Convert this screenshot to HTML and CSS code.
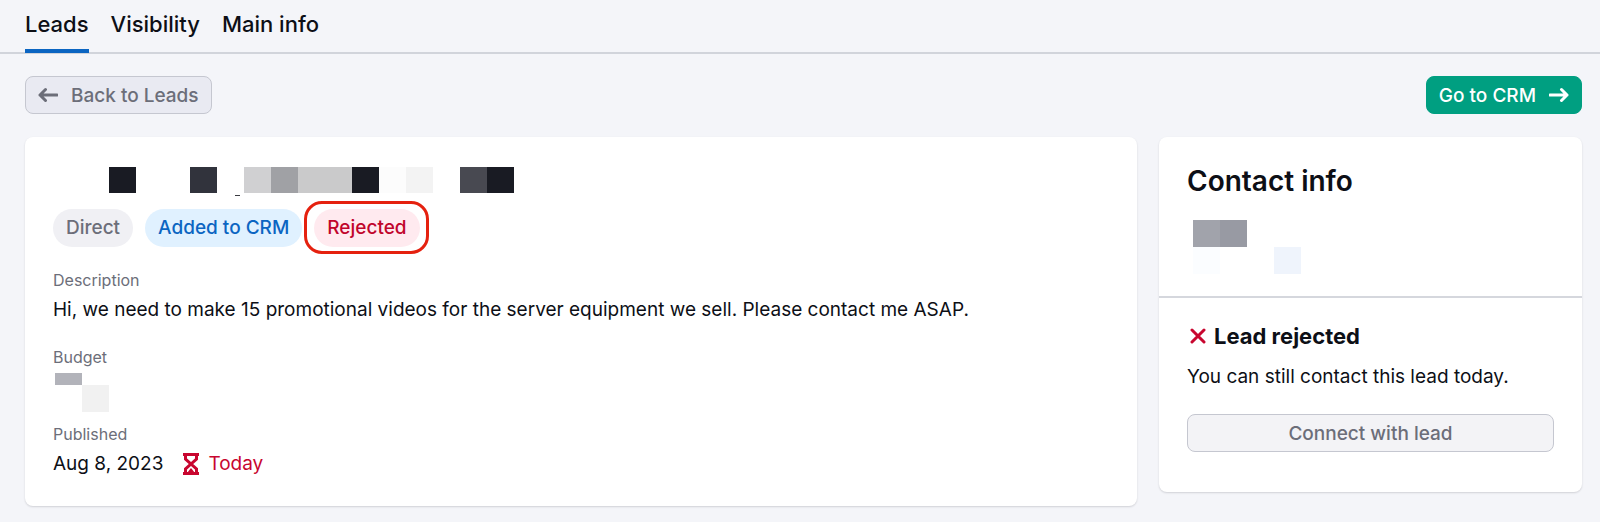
FILE: index.html
```
<!DOCTYPE html>
<html lang="en">
<head>
    <meta charset="UTF-8">
    <meta name="viewport" content="width=device-width, initial-scale=1.0">
    <title>Leads</title>
    <link rel="stylesheet" href="styles.css">
</head>
<body>
    <nav class="tabs">
        <a href="#" class="tab active">Leads</a>
        <a href="#" class="tab">Visibility</a>
        <a href="#" class="tab">Main info</a>
    </nav>
    <div class="toolbar">
        <button type="button" class="btn btn-back">
            <svg width="20" height="16" viewBox="0 0 20 16"><path d="M7.500 2.500 L2 8 L7.500 13.500 M2 8 H19"/></svg>
            Back to Leads
        </button>
        <button type="button" class="btn btn-crm">
            Go to CRM
            <svg width="20" height="16" viewBox="0 0 20 16"><path d="M12.500 2.500 L18 8 L12.500 13.500 M18 8 H1"/></svg>
        </button>
    </div>
    <main>
        <section class="card lead">
            <!-- hidden lead name -->
            <div class="mask mask-name">
                <i class="c-dark"></i><i></i><i></i><i class="c-coal"></i><i class="tail"></i>
                <i class="c-silver"></i><i class="c-gray"></i><i class="c-light"></i><i class="c-light"></i>
                <i class="c-dark"></i><i class="c-snow"></i><i class="c-pale"></i><i></i>
                <i class="c-slate"></i><i class="c-dark"></i>
            </div>
            <div class="tags">
                <span class="tag tag-direct">Direct</span>
                <span class="tag tag-crm">Added to CRM</span>
                <span class="tag tag-rejected">Rejected</span>
            </div>
            <dl>
                <dt>Description</dt>
                <dd>Hi, we need to make 15 promotional videos for the server equipment we sell. Please contact me ASAP.</dd>
                <dt>Budget</dt>
                <dd class="budget">
                    <div class="mask mask-budget">
                        <i class="c-steel"></i><i></i>
                        <i></i><i class="c-fog"></i>
                    </div>
                </dd>
                <dt>Published</dt>
                <dd class="published">
                    Aug 8, 2023
                    <span class="today">
                        <svg width="16" height="22" viewBox="0 0 16 22">
                            <path d="M0 1.500 H16 M0 20.500 H16 M2.500 2 V6 L13.500 16 V20 M13.500 2 V6 L2.500 16 V20"/>
                            <path class="sand" d="M4 20 L8 15 L12 20 Z"/>
                        </svg>
                        Today
                    </span>
                </dd>
            </dl>
        </section>
        <aside class="card contact">
            <div class="contact-info">
                <h2>Contact info</h2>
                <div class="mask mask-contact">
                    <i class="c-ash"></i><i class="c-iron"></i><i></i><i></i>
                    <i class="c-ice"></i><i></i><i></i><i class="c-sky"></i>
                </div>
            </div>
            <div class="status">
                <h3>
                    <svg width="16" height="16" viewBox="0 0 16 16"><path d="M2 2 L14 14 M14 2 L2 14"/></svg>
                    Lead rejected
                </h3>
                <p>You can still contact this lead today.</p>
                <button type="button" class="btn btn-connect" disabled>Connect with lead</button>
            </div>
        </aside>
    </main>
</body>
</html>
```
FILE: styles.css
```
* {
    box-sizing: border-box;
}
body {
    margin: 0;
    background-color: #f4f5f9;
    color: #0d0f16;
    font-family: Inter, "Liberation Sans", sans-serif;
    font-size: 19px;
}
h2, h3, p, dl, dd {
    margin: 0;
}
svg {
    flex: none;
    fill: none;
    stroke: currentColor;
    stroke-width: 3;
    stroke-linecap: round;
    stroke-linejoin: round;
}
.tabs {
    display: flex;
    gap: 22px;
    height: 54px;
    padding: 0 25px;
    border-bottom: 2px solid #d1d4db;
}
.tab {
    height: 53px;
    color: inherit;
    font-size: 22px;
    font-weight: 500;
    line-height: 49px;
    text-decoration: none;
}
.tab.active {
    border-bottom: 4px solid #0b65c2;
}
.toolbar {
    display: flex;
    justify-content: space-between;
    padding: 22px 18px 23px 25px;
}
.btn {
    display: flex;
    align-items: center;
    justify-content: center;
    gap: 13px;
    height: 38px;
    padding: 0 12px;
    border: 1px solid #c5c7d0;
    border-radius: 8px;
    font: 500 19px Inter, "Liberation Sans", sans-serif;
}
.btn-back {
    background-color: #e9eaf2;
    color: #6c6e79;
}
.btn-crm {
    border-color: #009f81;
    background-color: #009f81;
    color: #fff;
}
main {
    display: grid;
    grid-template-columns: 1fr 423px;
    align-items: start;
    gap: 22px;
    padding: 0 18px 16px 25px;
}
.card {
    border-radius: 8px;
    background-color: #fff;
    box-shadow: 0 1px 2px rgba(25, 27, 35, 0.16);
}
.lead {
    padding: 30px 28px 24px;
}

/* blocks that cover private data */
.mask {
    display: grid;
    grid-auto-rows: 27px;
}
.mask-name {
    grid-template-columns: repeat(15, 27px);
    grid-auto-rows: 26px;
    padding-left: 56px;
}
.mask-budget {
    grid-template-columns: 27px 27px;
    grid-template-rows: 12px 27px;
    padding-left: 2px;
}
.mask-contact {
    grid-template-columns: repeat(4, 27px);
    padding-left: 6px;
}
.c-dark { background-color: #191b23; }
.c-coal { background-color: #31333c; }
.c-slate { background-color: #484951; }
.c-silver { background-color: #d0d0d2; }
.c-gray { background-color: #a0a1a5; }
.c-light { background-color: #cacacb; }
.c-snow { background-color: #fcfcfc; }
.c-pale { background-color: #f3f3f3; }
.c-steel { background-color: #b2b3ba; }
.c-fog { background-color: #f1f1f1; }
.c-ash { background-color: #a1a3ab; }
.c-iron { background-color: #989aa3; }
.c-ice { background-color: #fbfdff; }
.c-sky { background-color: #eff4fc; }
.tail {
    position: relative;
}
.tail::after {
    content: "";
    position: absolute;
    right: 4px;
    bottom: -3px;
    width: 5px;
    height: 1px;
    background-color: #3a3b42;
}

.tags {
    display: flex;
    gap: 12px;
    margin: 16px 0 21px;
}
.tag {
    padding: 0 13px;
    border-radius: 19px;
    font-weight: 500;
    line-height: 38px;
}
.tag-direct {
    background-color: #f0f0f4;
    color: #6c6e79;
}
.tag-crm {
    background-color: #e0f1ff;
    color: #0b65c2;
}
.tag-rejected {
    position: relative;
    background-color: #ffeaef;
    color: #c1052c;
}
.tag-rejected::after {
    content: "";
    position: absolute;
    inset: -8px -9px -7px -10px;
    border: 3px solid #e5210f;
    border-radius: 18px;
}
dt {
    color: #6c6e79;
    font-size: 16px;
    line-height: 24px;
}
dd {
    margin-bottom: 17px;
    line-height: 36px;
}
dd:last-child {
    margin-bottom: 0;
}
.budget {
    height: 36px;
    padding-top: 4px;
}
.published {
    display: flex;
    gap: 20px;
}
.today {
    display: flex;
    align-items: center;
    gap: 9px;
    color: #c8062f;
}
.today svg {
    stroke-width: 3;
    stroke-linecap: butt;
    stroke-linejoin: miter;
}
.today .sand {
    fill: currentColor;
    stroke: none;
}

.contact-info {
    padding: 24px 28px 22px;
    border-bottom: 2px solid #d5d7dd;
}
.contact-info h2 {
    margin-bottom: 19px;
    font-size: 28px;
    font-weight: 600;
    line-height: 40px;
}
.status {
    padding: 24px 28px 40px;
}
.status h3 {
    display: flex;
    align-items: center;
    gap: 8px;
    padding-left: 3px;
    font-size: 22px;
    font-weight: 700;
    line-height: 28px;
}
.status h3 svg {
    color: #c8062f;
}
.status p {
    margin: 8px 0 18px;
    line-height: 38px;
}
.btn-connect {
    width: 100%;
    background-color: #f3f3f6;
    color: #6c6e79;
}
```
